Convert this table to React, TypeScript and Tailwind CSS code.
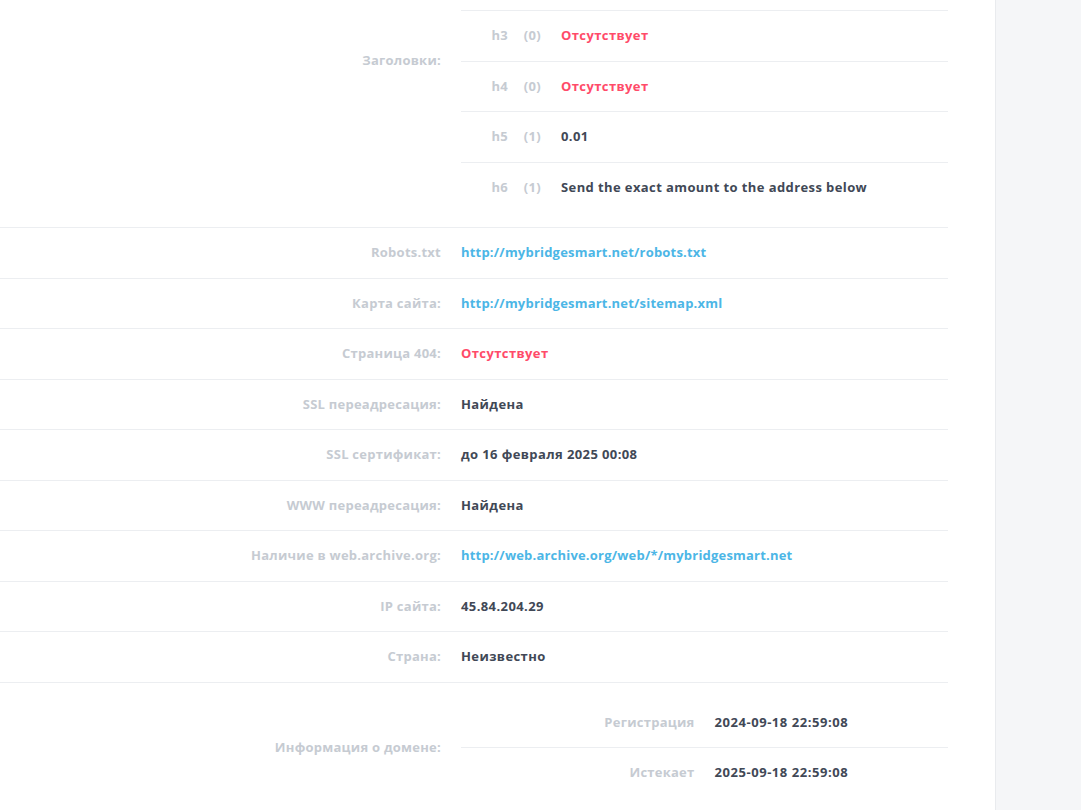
import type { ReactNode } from "react";

type Tone = "text" | "link" | "bad";

const toneClass: Record<Tone, string> = {
  text: "text-[#414856] tracking-[0.4px]",
  link: "text-[#4cb6e6] tracking-[0.2px]",
  bad: "text-[#ff4b69] tracking-[0.4px]",
};

const headings: { tag: string; count: number; value: string; tone: Tone }[] = [
  { tag: "h3", count: 0, value: "Отсутствует", tone: "bad" },
  { tag: "h4", count: 0, value: "Отсутствует", tone: "bad" },
  { tag: "h5", count: 1, value: "0.01", tone: "text" },
  { tag: "h6", count: 1, value: "Send the exact amount to the address below", tone: "text" },
];

const rows: { label: string; value: string; tone: Tone }[] = [
  { label: "Robots.txt", value: "http://mybridgesmart.net/robots.txt", tone: "link" },
  { label: "Карта сайта:", value: "http://mybridgesmart.net/sitemap.xml", tone: "link" },
  { label: "Страница 404:", value: "Отсутствует", tone: "bad" },
  { label: "SSL переадресация:", value: "Найдена", tone: "text" },
  { label: "SSL сертификат:", value: "до 16 февраля 2025 00:08", tone: "text" },
  { label: "WWW переадресация:", value: "Найдена", tone: "text" },
  { label: "Наличие в web.archive.org:", value: "http://web.archive.org/web/*/mybridgesmart.net", tone: "link" },
  { label: "IP сайта:", value: "45.84.204.29", tone: "text" },
  { label: "Страна:", value: "Неизвестно", tone: "text" },
];

function Row({ label, children }: { label: string; children: ReactNode }) {
  return (
    <div className="flex items-center border-b border-[#eceef1]">
      <div className="w-[451px] shrink-0 pr-[10px] text-right tracking-[0.25px] text-[#c6cbd2]">{label}</div>
      <div className="flex-1 py-[15px] pl-[10px]">{children}</div>
    </div>
  );
}

export default function App() {
  return (
    <div
      className="flex h-[810px] overflow-hidden bg-white text-[13px] font-bold leading-[1.5]"
      style={{ fontFamily: '"Open Sans", "Liberation Sans", sans-serif' }}
    >
      <main className="w-[995px] shrink-0">
        <div className="w-[948px]">
          <div className="flex items-start border-b border-[#eceef1]">
            <div className="w-[451px] shrink-0 pt-[51px] pr-[10px] text-right tracking-[0.25px] text-[#c6cbd2]">
              Заголовки:
            </div>
            <div className="flex-1 pb-[15px] pl-[10px] pt-[10px]">
              {headings.map((h) => (
                <div key={h.tag} className="flex border-t border-[#eceef1] py-[15px]">
                  <span className="w-[57px] shrink-0 pr-[10px] text-right tracking-[0.3px] text-[#c6cbd2]">{h.tag}</span>
                  <span className="w-[33px] shrink-0 pr-[10px] text-right tracking-[0.3px] text-[#c6cbd2]">({h.count})</span>
                  <span className={`pl-[10px] ${toneClass[h.tone]}`}>{h.value}</span>
                </div>
              ))}
            </div>
          </div>
          {rows.map((r) => (
            <Row key={r.label} label={r.label}>
              <span className={toneClass[r.tone]}>{r.value}</span>
            </Row>
          ))}
          <Row label="Информация о домене:">
            <div className="flex flex-col">
              <div className="flex border-b border-[#eceef1] py-[15px]">
                <span className="w-1/2 pr-[10px] text-right tracking-[0.25px] text-[#c6cbd2]">Регистрация</span>
                <span className="w-1/2 pl-[10px] tracking-[0.55px] text-[#414856]">2024-09-18 22:59:08</span>
              </div>
              <div className="flex py-[15px]">
                <span className="w-1/2 pr-[10px] text-right tracking-[0.25px] text-[#c6cbd2]">Истекает</span>
                <span className="w-1/2 pl-[10px] tracking-[0.55px] text-[#414856]">2025-09-18 22:59:08</span>
              </div>
            </div>
          </Row>
        </div>
      </main>
      <aside className="flex-1 border-l border-[#e9ebee] bg-[#f5f6f8]" />
    </div>
  );
}
